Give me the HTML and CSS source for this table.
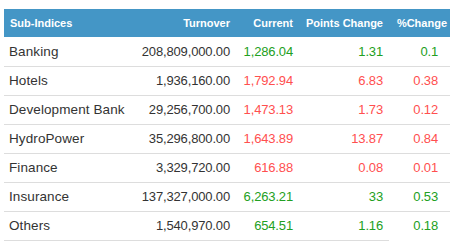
FILE: index.html
```html
<!DOCTYPE html>
<html>
<head>
<meta charset="utf-8">
<link rel="stylesheet" href="styles.css">
</head>
<body>
<table class="idx">
  <colgroup>
    <col class="c-name"><col class="c-turn"><col class="c-cur"><col class="c-pts"><col class="c-pct">
  </colgroup>
  <thead>
    <tr>
      <th class="h-name">Sub-Indices</th>
      <th class="h-num">Turnover</th>
      <th class="h-num">Current</th>
      <th class="h-num">Points Change</th>
      <th class="h-pct">%Change</th>
    </tr>
  </thead>
  <tbody>
    <tr><td class="name">Banking</td><td class="num">208,809,000.00</td><td class="num up">1,286.04</td><td class="num up">1.31</td><td class="pct up">0.1</td></tr>
    <tr><td class="name">Hotels</td><td class="num">1,936,160.00</td><td class="num down">1,792.94</td><td class="num down">6.83</td><td class="pct down">0.38</td></tr>
    <tr><td class="name">Development Bank</td><td class="num">29,256,700.00</td><td class="num down">1,473.13</td><td class="num down">1.73</td><td class="pct down">0.12</td></tr>
    <tr><td class="name">HydroPower</td><td class="num">35,296,800.00</td><td class="num down">1,643.89</td><td class="num down">13.87</td><td class="pct down">0.84</td></tr>
    <tr><td class="name">Finance</td><td class="num">3,329,720.00</td><td class="num down">616.88</td><td class="num down">0.08</td><td class="pct down">0.01</td></tr>
    <tr><td class="name">Insurance</td><td class="num">137,327,000.00</td><td class="num up">6,263.21</td><td class="num up">33</td><td class="pct up">0.53</td></tr>
    <tr class="last"><td class="name">Others</td><td class="num">1,540,970.00</td><td class="num up">654.51</td><td class="num up">1.16</td><td class="pct up">0.18</td></tr>
  </tbody>
</table>
</body>
</html>
```
FILE: styles.css
```css
html, body {
  margin: 0;
  background: #fff;
}
body {
  padding: 9px 5px 0 4px;
  font-family: "Liberation Sans", Arial, sans-serif;
  color: #333;
}
.idx {
  width: 446px;
  table-layout: fixed;
  border-collapse: collapse;
  border-spacing: 0;
}
.c-name { width: 136px; }
.c-turn { width: 96px; }
.c-cur { width: 63px; }
.c-pts { width: 90px; }
.c-pct { width: 61px; }

.idx th {
  background: #4496c6;
  color: #fff;
  font-size: 11px;
  font-weight: bold;
  height: 28px;
  padding: 0;
  white-space: nowrap;
}
.h-name { text-align: left; padding-left: 6px !important; }
.h-num { text-align: right; padding-right: 6px !important; }
.h-pct { text-align: right; padding-right: 3px !important; }

.idx td {
  height: 28px;
  padding: 0;
  border-top: 1px solid #fff;
  border-bottom: 1px solid #ddd;
  white-space: nowrap;
  line-height: 16px;
}
.idx .pct {
  border-bottom-color: #ddd;
}
.idx tr.last td.pct {
  border-bottom-color: #fff;
}
.name {
  font-size: 13.5px;
  letter-spacing: 0.1px;
  text-align: left;
  padding-left: 5px !important;
}
.num {
  font-size: 13px;
  letter-spacing: -0.15px;
  text-align: right;
  padding-right: 6px !important;
}
.pct {
  font-size: 13px;
  letter-spacing: -0.15px;
  text-align: right;
  padding-right: 12px !important;
}
.up { color: #22a022; }
.down { color: #ff4f4f; }
```
